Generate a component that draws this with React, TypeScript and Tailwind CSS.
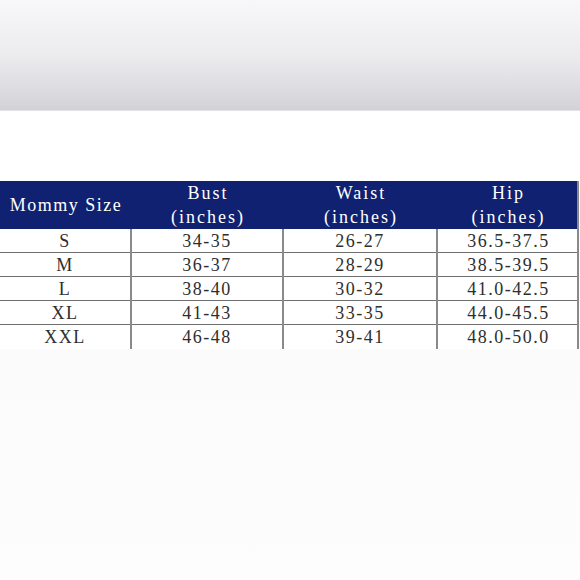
const rows = [
  ["S", "34-35", "26-27", "36.5-37.5"],
  ["M", "36-37", "28-29", "38.5-39.5"],
  ["L", "38-40", "30-32", "41.0-42.5"],
  ["XL", "41-43", "33-35", "44.0-45.5"],
  ["XXL", "46-48", "39-41", "48.0-50.0"],
];

const cols = "grid grid-cols-[132px_152px_154px_141px]";

export default function App() {
  return (
    <div className="w-[580px] h-[580px] bg-white overflow-hidden font-['Liberation_Serif',serif]">
      <div className="h-[111px] bg-gradient-to-b from-[#f8f8fa] via-[#ececef] to-[#d3d2d7] border-b border-[#e4e4e8]" />
      <div className="h-[70px]" />

      <div className="w-[579px] border-r-2 border-[#8a8a8a]">
        <div className={`${cols} h-[48px] bg-[#0f2170] text-white text-[18px] leading-[24px] tracking-[2px]`}>
          <div className="flex items-center justify-center tracking-[1.5px]">Mommy Size</div>
          <div className="flex flex-col items-center justify-center">
            <span>Bust</span>
            <span>(inches)</span>
          </div>
          <div className="flex flex-col items-center justify-center">
            <span>Waist</span>
            <span>(inches)</span>
          </div>
          <div className="flex flex-col items-center justify-center">
            <span>Hip</span>
            <span>(inches)</span>
          </div>
        </div>

        {rows.map((r, i) => (
          <div
            key={r[0]}
            className={`${cols} h-[24px] text-[18px] leading-[24px] tracking-[1.5px] text-[#2e2e2e] ${
              i < rows.length - 1 ? "border-b border-[#6f6f6f]" : ""
            }`}
          >
            {r.map((c, j) => (
              <div
                key={j}
                className={`flex items-center justify-center ${
                  j < 3 ? "border-r-2 border-[#8a8a8a]" : ""
                }`}
              >
                {c}
              </div>
            ))}
          </div>
        ))}
      </div>

      <div className="h-[230px] bg-gradient-to-b from-[#fbfbfb] to-[#fdfdfd]" />
    </div>
  );
}
